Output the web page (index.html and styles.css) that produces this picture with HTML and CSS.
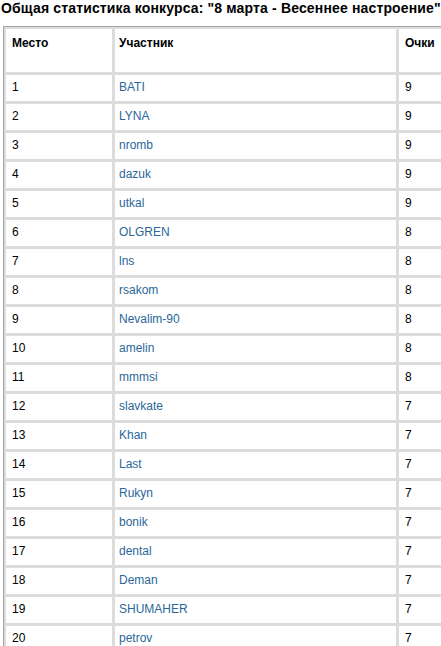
FILE: index.html
```html
<!DOCTYPE html>
<html lang="ru">
<head>
<meta charset="utf-8">
<title>Общая статистика конкурса</title>
<link rel="stylesheet" href="styles.css">
</head>
<body>
<h1 class="title">Общая статистика конкурса: "8 марта - Весеннее настроение"</h1>
<table class="stats">
  <thead>
    <tr class="head">
      <th class="c-place">Место</th>
      <th class="c-name">Участник</th>
      <th class="c-score">Очки</th>
    </tr>
  </thead>
  <tbody>
    <tr><td>1</td><td><a href="#">BATI</a></td><td>9</td></tr>
    <tr><td>2</td><td><a href="#">LYNA</a></td><td>9</td></tr>
    <tr><td>3</td><td><a href="#">nromb</a></td><td>9</td></tr>
    <tr><td>4</td><td><a href="#">dazuk</a></td><td>9</td></tr>
    <tr><td>5</td><td><a href="#">utkal</a></td><td>9</td></tr>
    <tr><td>6</td><td><a href="#">OLGREN</a></td><td>8</td></tr>
    <tr><td>7</td><td><a href="#">lns</a></td><td>8</td></tr>
    <tr><td>8</td><td><a href="#">rsakom</a></td><td>8</td></tr>
    <tr><td>9</td><td><a href="#">Nevalim-90</a></td><td>8</td></tr>
    <tr><td>10</td><td><a href="#">amelin</a></td><td>8</td></tr>
    <tr><td>11</td><td><a href="#">mmmsi</a></td><td>8</td></tr>
    <tr><td>12</td><td><a href="#">slavkate</a></td><td>7</td></tr>
    <tr><td>13</td><td><a href="#">Khan</a></td><td>7</td></tr>
    <tr><td>14</td><td><a href="#">Last</a></td><td>7</td></tr>
    <tr><td>15</td><td><a href="#">Rukyn</a></td><td>7</td></tr>
    <tr><td>16</td><td><a href="#">bonik</a></td><td>7</td></tr>
    <tr><td>17</td><td><a href="#">dental</a></td><td>7</td></tr>
    <tr><td>18</td><td><a href="#">Deman</a></td><td>7</td></tr>
    <tr><td>19</td><td><a href="#">SHUMAHER</a></td><td>7</td></tr>
    <tr><td>20</td><td><a href="#">petrov</a></td><td>7</td></tr>
  </tbody>
</table>
</body>
</html>
```
FILE: styles.css
```css
html, body {
  margin: 0;
  padding: 0;
  background: #fff;
  overflow: hidden;
}
body {
  font-family: "Liberation Sans", Arial, sans-serif;
  color: #000;
}
.title {
  margin: 0;
  padding: 0 0 0 1px;
  font-size: 14px;
  letter-spacing: 0.15px;
  line-height: 17px;
  font-weight: bold;
  white-space: nowrap;
  height: 26px;
}
.stats {
  margin-left: 3px;
  border: 1px solid #a3a3a3;
  border-spacing: 1px;
  background: #dcdcdc;
  font-size: 12px;
  width: 480px;
}
.stats th,
.stats td {
  border: 1px solid #dcdcdc;
  background: #fff;
  text-align: left;
  padding: 0 6px 2px;
  height: 24px;
  line-height: 14px;
}
.stats th {
  font-weight: bold;
  vertical-align: top;
  padding-top: 7px;
  padding-bottom: 0;
  height: 36px;
}
.c-place { width: 94px; }
.c-name { width: 271px; }
.stats td:nth-child(2) { padding-left: 4px; }
.stats th.c-name { padding-left: 4px; }
.stats a {
  color: #2b679a;
  text-decoration: none;
}
```
